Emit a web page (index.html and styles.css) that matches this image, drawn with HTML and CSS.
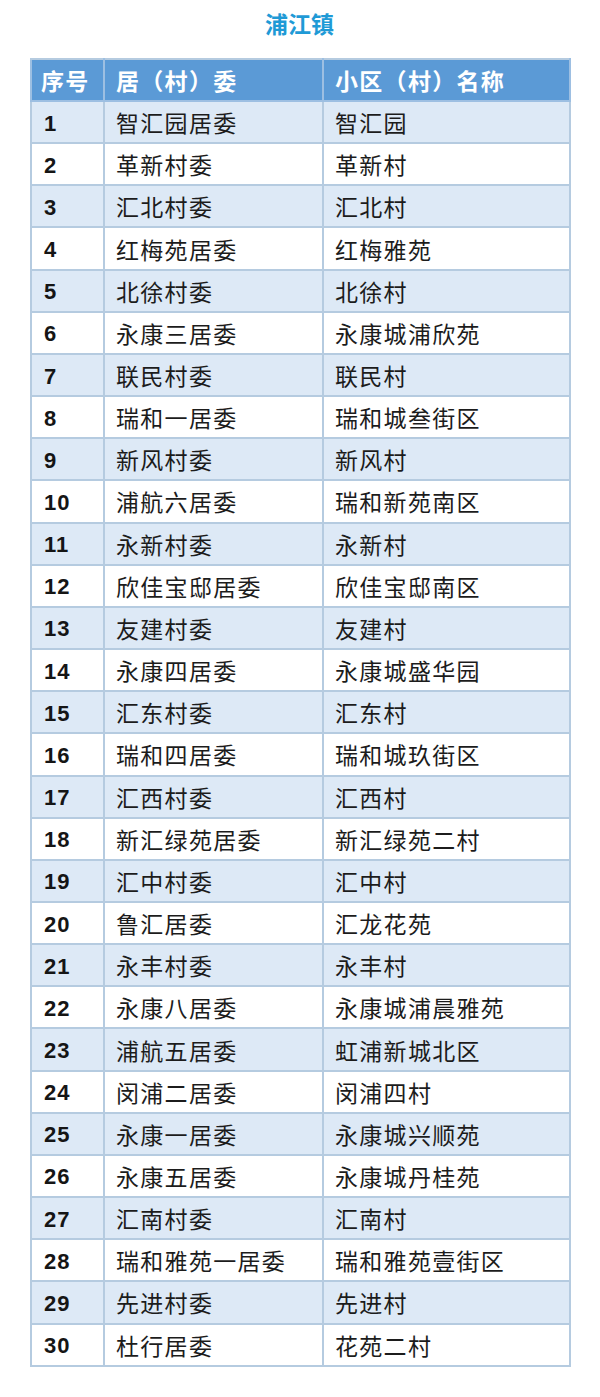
FILE: index.html
```html
<!DOCTYPE html>
<html lang="zh">
<head>
<meta charset="utf-8">
<title>浦江镇</title>
<link rel="stylesheet" href="styles.css">
</head>
<body>
<div class="page">
  <h1 class="title">浦江镇</h1>
  <table class="list">
    <colgroup><col class="c1"><col class="c2"><col class="c3"></colgroup>
    <thead>
      <tr><th>序号</th><th>居（村）委</th><th>小区（村）名称</th></tr>
    </thead>
    <tbody>
      <tr><td class="num">1</td><td>智汇园居委</td><td>智汇园</td></tr>
      <tr><td class="num">2</td><td>革新村委</td><td>革新村</td></tr>
      <tr><td class="num">3</td><td>汇北村委</td><td>汇北村</td></tr>
      <tr><td class="num">4</td><td>红梅苑居委</td><td>红梅雅苑</td></tr>
      <tr><td class="num">5</td><td>北徐村委</td><td>北徐村</td></tr>
      <tr><td class="num">6</td><td>永康三居委</td><td>永康城浦欣苑</td></tr>
      <tr><td class="num">7</td><td>联民村委</td><td>联民村</td></tr>
      <tr><td class="num">8</td><td>瑞和一居委</td><td>瑞和城叁街区</td></tr>
      <tr><td class="num">9</td><td>新风村委</td><td>新风村</td></tr>
      <tr><td class="num">10</td><td>浦航六居委</td><td>瑞和新苑南区</td></tr>
      <tr><td class="num">11</td><td>永新村委</td><td>永新村</td></tr>
      <tr><td class="num">12</td><td>欣佳宝邸居委</td><td>欣佳宝邸南区</td></tr>
      <tr><td class="num">13</td><td>友建村委</td><td>友建村</td></tr>
      <tr><td class="num">14</td><td>永康四居委</td><td>永康城盛华园</td></tr>
      <tr><td class="num">15</td><td>汇东村委</td><td>汇东村</td></tr>
      <tr><td class="num">16</td><td>瑞和四居委</td><td>瑞和城玖街区</td></tr>
      <tr><td class="num">17</td><td>汇西村委</td><td>汇西村</td></tr>
      <tr><td class="num">18</td><td>新汇绿苑居委</td><td>新汇绿苑二村</td></tr>
      <tr><td class="num">19</td><td>汇中村委</td><td>汇中村</td></tr>
      <tr><td class="num">20</td><td>鲁汇居委</td><td>汇龙花苑</td></tr>
      <tr><td class="num">21</td><td>永丰村委</td><td>永丰村</td></tr>
      <tr><td class="num">22</td><td>永康八居委</td><td>永康城浦晨雅苑</td></tr>
      <tr><td class="num">23</td><td>浦航五居委</td><td>虹浦新城北区</td></tr>
      <tr><td class="num">24</td><td>闵浦二居委</td><td>闵浦四村</td></tr>
      <tr><td class="num">25</td><td>永康一居委</td><td>永康城兴顺苑</td></tr>
      <tr><td class="num">26</td><td>永康五居委</td><td>永康城丹桂苑</td></tr>
      <tr><td class="num">27</td><td>汇南村委</td><td>汇南村</td></tr>
      <tr><td class="num">28</td><td>瑞和雅苑一居委</td><td>瑞和雅苑壹街区</td></tr>
      <tr><td class="num">29</td><td>先进村委</td><td>先进村</td></tr>
      <tr><td class="num">30</td><td>杜行居委</td><td>花苑二村</td></tr>
    </tbody>
  </table>
</div>
</body>
</html>
```
FILE: styles.css
```css
html, body {
  margin: 0;
  padding: 0;
  background: #ffffff;
}
.page {
  font-family: "Noto Sans CJK SC", "Noto Sans", sans-serif;
  padding: 8px 30px 0 30px;
  width: 539px;
}
.title {
  margin: 0 0 20px 0;
  text-align: center;
  font-size: 23px;
  line-height: 30px;
  font-weight: 700;
  color: #1f9ad6;
}
.list {
  border-collapse: collapse;
  width: 539px;
  table-layout: fixed;
  border: 2px solid #b5cbe0;
}
.c1 { width: 73px; }
.c2 { width: 219px; }
.c3 { width: 247px; }
.list th, .list td {
  border: 2px solid #b5cbe0;
  height: 40.17px;
  padding: 0 0 0 11px;
  text-align: left;
  vertical-align: middle;
  font-size: 23px;
  line-height: 26px;
  letter-spacing: 1.3px;
  color: #1c1c1c;
  white-space: nowrap;
}
.list thead th {
  height: 40px;
  background: #5b9ad6;
  color: #ffffff;
  font-weight: 700;
  border-color: #9dbfe2;
  border-top-color: #b5cbe0;
}
.list thead th:first-child { padding-left: 9px; }
.list tbody tr:nth-child(odd) td { background: #dde9f6; }
.list tbody tr:nth-child(even) td { background: #ffffff; }
.list td.num {
  font-family: "Liberation Sans", "Noto Sans", sans-serif;
  font-weight: 700;
  font-size: 22px;
  letter-spacing: 1px;
  height: 37.17px;
  padding-left: 12px;
  padding-top: 3px;
  color: #151515;
}
```
